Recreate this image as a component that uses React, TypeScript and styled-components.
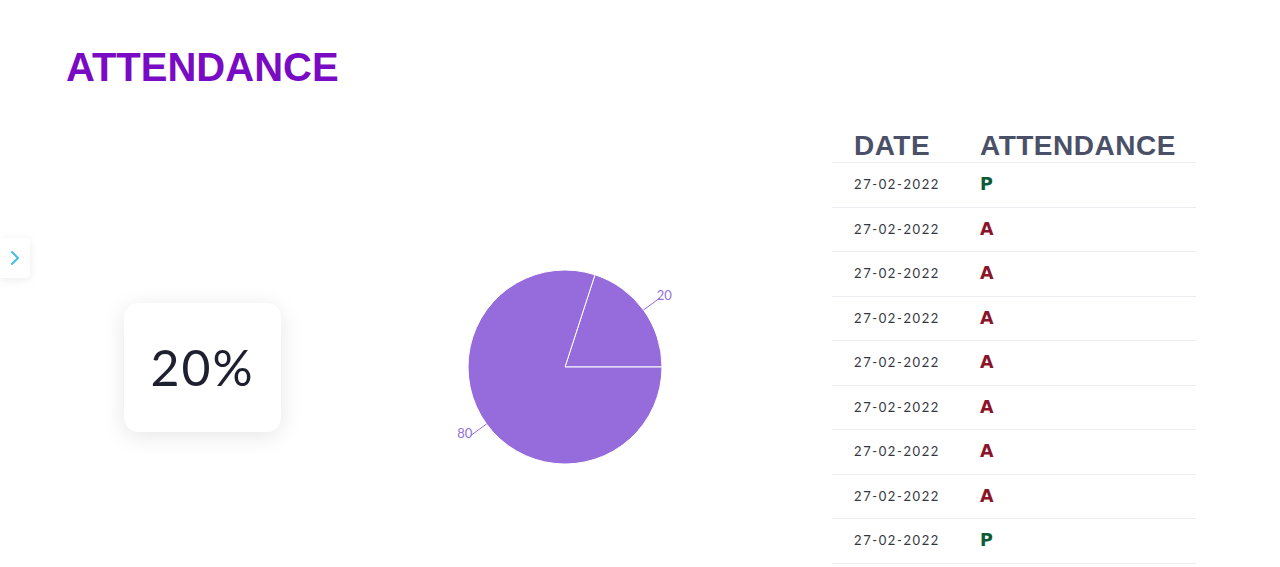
import React from "react";
import styled, { createGlobalStyle } from "styled-components";
import { ChevronRight } from "lucide-react";

const GlobalStyle = createGlobalStyle`
  html, body { margin: 0; padding: 0; background: #ffffff; }
  body { font-family: "Lato", "Open Sans", sans-serif; overflow: hidden; }
  * { box-sizing: border-box; }
`;

const Page = styled.main`
  position: relative;
  min-height: 567px;
  padding: 44px 0 0 0;
`;

const SideTab = styled.button`
  position: absolute;
  left: 0;
  top: 238px;
  width: 30px;
  height: 40px;
  border: none;
  padding: 0;
  background: #ffffff;
  border-radius: 0 4px 4px 0;
  box-shadow: 0 2px 10px rgba(0, 0, 0, 0.08);
  display: flex;
  align-items: center;
  justify-content: center;
  color: #45bde6;
`;

const Title = styled.h1`
  margin: 0 0 0 66px;
  font-family: "Liberation Sans", Arial, sans-serif;
  font-weight: 700;
  font-size: 40px;
  line-height: 46px;
  color: #7a0bc4;
`;

const Row = styled.section`
  display: flex;
  align-items: center;
  padding: 0 84px 0 124px;
  margin-top: 36px;
`;

const Card = styled.div`
  width: 157px;
  height: 129px;
  flex: none;
  border-radius: 14px;
  background: #ffffff;
  box-shadow: 0 4px 22px rgba(0, 0, 0, 0.1);
  display: flex;
  align-items: center;
  justify-content: center;
  font-family: "Lato", sans-serif;
  font-weight: 400;
  font-size: 50px;
  color: #1e2030;
  letter-spacing: 2px;
`;

const PieWrap = styled.div`
  flex: 1;
  display: flex;
  justify-content: center;
  padding-left: 17px;
`;

const Table = styled.table`
  width: 364px;
  flex: none;
  border-collapse: collapse;
`;

const Th = styled.th`
  text-align: left;
  font-family: "Liberation Sans", Arial, sans-serif;
  font-weight: 700;
  font-size: 28px;
  line-height: 32px;
  letter-spacing: 0.5px;
  color: #4a5068;
  padding: 4px 0 0 22px;
  border-bottom: 1px solid #eceef1;
`;

const Td = styled.td`
  padding: 12px 0 12px 22px;
  height: 44.5px;
  border-bottom: 1px solid #eceef1;
  vertical-align: middle;
`;

const DateText = styled.span`
  display: block;
  line-height: 19.5px;
  font-family: "Lato", sans-serif;
  font-size: 13px;
  letter-spacing: 1.6px;
  color: #333640;
`;

const Mark = styled.span<{ $present: boolean }>`
  display: block;
  line-height: 19.5px;
  font-family: "DejaVu Sans", sans-serif;
  font-weight: 700;
  font-size: 17.5px;
  color: ${(p) => (p.$present ? "#0d5a36" : "#8a1429")};
`;

const PieLabel = styled.text`
  font-family: "Lato", sans-serif;
  font-size: 13px;
  fill: #9370db;
`;

const rows = ["P", "A", "A", "A", "A", "A", "A", "A", "P", "A"];

const PURPLE = "#966bdb";

function polar(cx: number, cy: number, r: number, deg: number) {
  const a = (deg * Math.PI) / 180;
  return [cx + r * Math.cos(a), cy - r * Math.sin(a)];
}

function slicePath(cx: number, cy: number, r: number, start: number, end: number) {
  const [x1, y1] = polar(cx, cy, r, start);
  const [x2, y2] = polar(cx, cy, r, end);
  const large = end - start > 180 ? 1 : 0;
  return `M${cx},${cy} L${x1},${y1} A${r},${r} 0 ${large} 0 ${x2},${y2} Z`;
}

function Pie() {
  const cx = 130;
  const cy = 120;
  const r = 97;
  const data = [
    { value: 20, start: 0, end: 72 },
    { value: 80, start: 72, end: 360 },
  ];
  return (
    <svg width={260} height={240} viewBox="0 0 260 240">
      {data.map((d) => (
        <path
          key={d.value}
          d={slicePath(cx, cy, r, d.start, d.end)}
          fill={PURPLE}
          stroke="#ffffff"
          strokeWidth={1}
        />
      ))}
      {data.map((d) => {
        const mid = (d.start + d.end) / 2;
        const [x1, y1] = polar(cx, cy, r, mid);
        const [x2, y2] = polar(cx, cy, r + 20, mid);
        const right = Math.cos((mid * Math.PI) / 180) >= 0;
        return (
          <g key={`l${d.value}`}>
            <path d={`M${x1},${y1} L${x2},${y2}`} stroke={PURPLE} fill="none" strokeWidth={1} />
            <PieLabel
              x={x2 + (right ? -3 : 2)}
              y={y2 - 3}
              textAnchor={right ? "start" : "end"}
              dominantBaseline="central"
            >
              {d.value}
            </PieLabel>
          </g>
        );
      })}
    </svg>
  );
}

export default function App() {
  return (
    <>
      <GlobalStyle />
      <Page>
        <SideTab aria-label="Open sidebar">
          <ChevronRight size={24} strokeWidth={2} />
        </SideTab>
        <Title>ATTENDANCE</Title>
        <Row>
          <Card>20%</Card>
          <PieWrap>
            <Pie />
          </PieWrap>
          <Table>
            <colgroup>
              <col style={{ width: 126 }} />
              <col />
            </colgroup>
            <thead>
              <tr>
                <Th>DATE</Th>
                <Th>ATTENDANCE</Th>
              </tr>
            </thead>
            <tbody>
              {rows.map((m, i) => (
                <tr key={i}>
                  <Td>
                    <DateText>27-02-2022</DateText>
                  </Td>
                  <Td>
                    <Mark $present={m === "P"}>{m}</Mark>
                  </Td>
                </tr>
              ))}
            </tbody>
          </Table>
        </Row>
      </Page>
    </>
  );
}
